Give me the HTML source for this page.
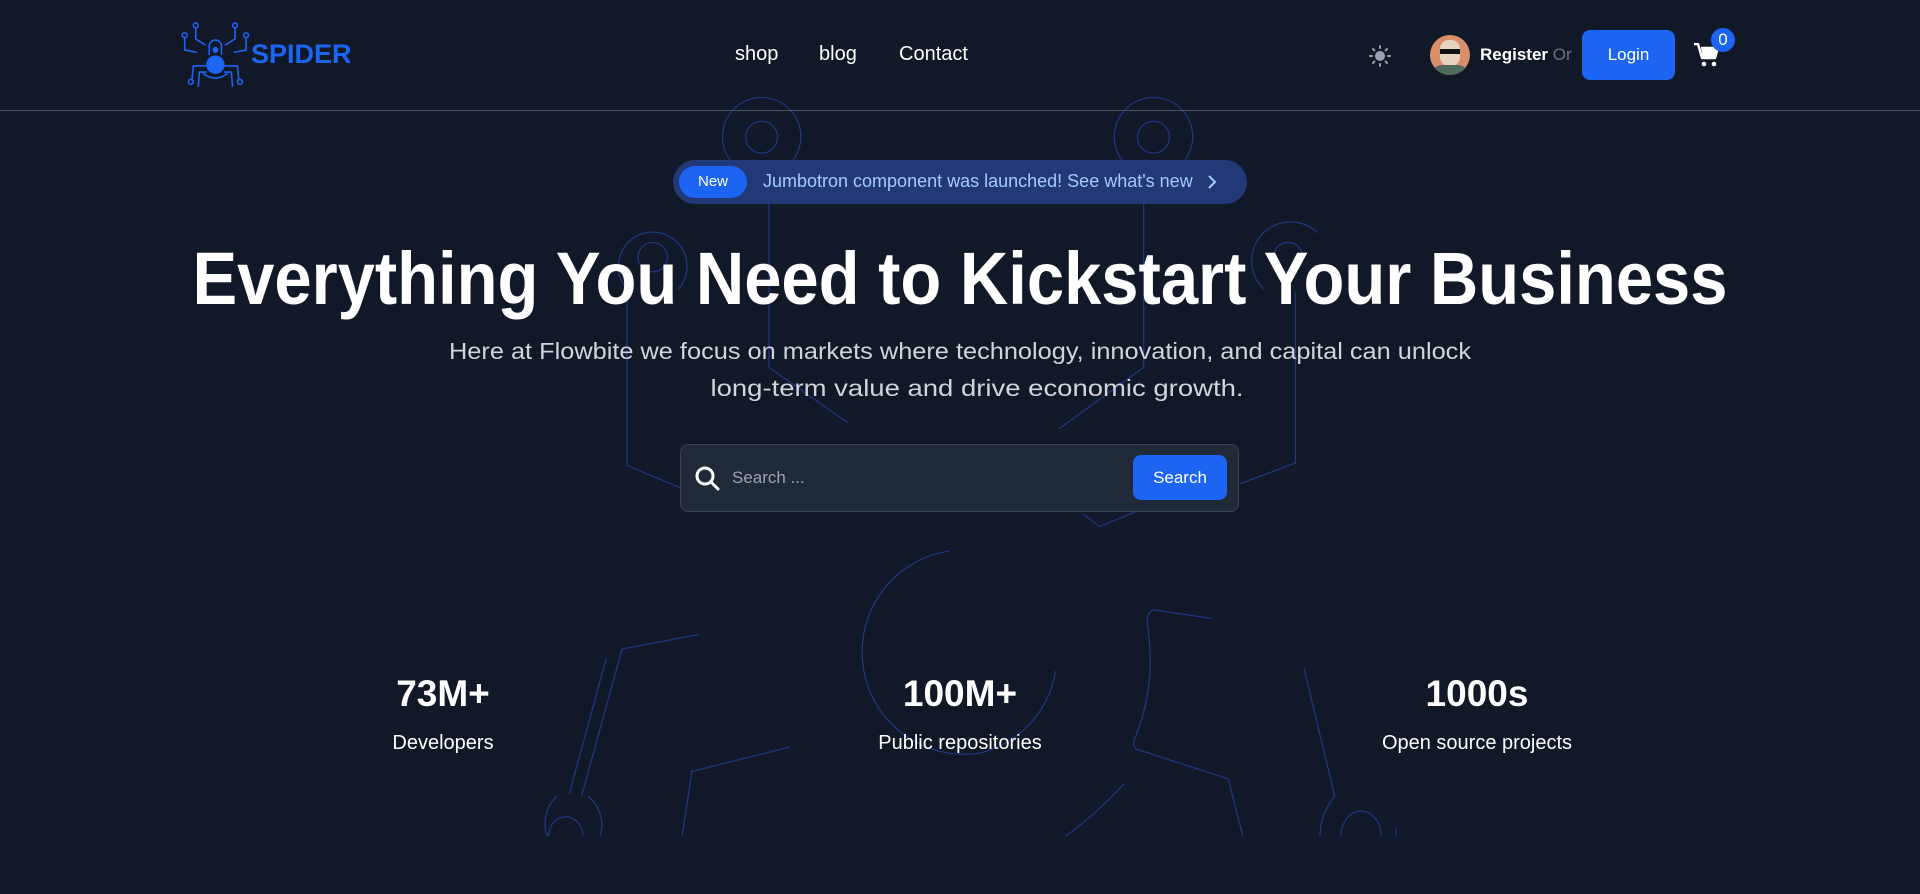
<!DOCTYPE html>
<html><head><meta charset="utf-8"><style>
*{margin:0;padding:0;box-sizing:border-box}
html,body{width:1920px;height:894px;overflow:hidden;background:#111827;font-family:"Liberation Sans",sans-serif;color:#fff}
.bg{position:absolute;left:0;top:0;width:1920px;height:894px}
header{position:absolute;left:0;top:0;width:1920px;height:111px;border-bottom:1px solid #4b5563}
.abs{position:absolute}
.nav a{position:absolute;top:43px;font-size:20px;color:#fff;text-decoration:none}
.badge{position:absolute;left:673px;top:160px;width:574px;height:44px;border-radius:22px;background:#233876}
.badge .new{position:absolute;left:6px;top:6px;width:68px;height:32px;border-radius:16px;background:#1c64f2;font-size:15px;text-align:center;line-height:32px}
.badge .t{position:absolute;left:90px;top:11px;font-size:18px;color:#a4cafe;white-space:nowrap}
.search{position:absolute;left:680px;top:444px;width:559px;height:68px;border-radius:8px;background:#1f2937;border:1px solid #374151}
.btn{position:absolute;background:#1c64f2;border-radius:8px;color:#fff;text-align:center;font-weight:bold}
.stat{position:absolute;width:400px;text-align:center}
.stat b{display:block;font-size:37px;line-height:40px}
.stat span{display:block;font-size:20px;margin-top:18px}
</style></head><body>
<svg class="bg" viewBox="0 0 1568 730" fill="none" stroke="#1e3a8a" stroke-width="1" opacity="0.95">
<circle cx="622" cy="112" r="13"/><path d="M604 138 A32 32 0 1 1 640 138"/>
<path d="M628 140 V300 L692 345"/>
<circle cx="942" cy="112" r="13"/><path d="M924 138 A32 32 0 1 1 960 138"/>
<path d="M934 140 V300 L865 350"/>
<circle cx="533" cy="210" r="12"/><path d="M512 236 A28 28 0 1 1 554 236"/>
<path d="M512 238 V380 L555 398"/>
<circle cx="1052" cy="210" r="12"/><path d="M1032 236 A28 28 0 1 1 1076 190"/>
<path d="M1058 238 V378 L1013 395"/>
<path d="M885 420 L898 430 L927 418"/>
<path d="M775 450 A82 82 0 0 0 800 615 A82 82 0 0 0 862 548"/>
<path d="M571 518 L508 530 L475 650 M495 538 L465 648"/>
<path d="M447 683 A30 30 0 0 1 455 650 M490 683 A30 30 0 0 0 480 650"/>
<path d="M448 683 A14 16 0 0 1 476 683"/>
<path d="M645 610 L565 630 L557 683"/>
<path d="M990 505 L942 498 Q936 500 937 510 Q945 560 926 605 Q925 612 932 613 L1003 636 L1015 683"/>
<path d="M1065 546 L1090 650 Q1078 665 1078 683 M1095 683 A16 20 0 0 1 1128 683 M1140 683 V676"/>
<path d="M918 640 Q895 665 870 683"/>
</svg>

<header>
<svg class="abs" style="left:181px;top:18px" width="70" height="70" viewBox="0 0 57 57" fill="none" stroke="#1c64f2" stroke-width="1.3">
<circle cx="12" cy="6" r="2"/><circle cx="44" cy="6" r="2"/><circle cx="3" cy="14" r="2"/><circle cx="53" cy="14" r="2"/>
<path d="M12 8 V17 L20 22 M44 8 V17 L36 22 M3 16 V26 L13 28 M53 16 V26 L43 28"/>
<path d="M23 30 V23 A5 5 0 0 1 33 23 V30"/><circle cx="28" cy="26" r="1.8" fill="#1c64f2"/>
<circle cx="28" cy="38" r="7.5" fill="#1c64f2" stroke="none"/>
<path d="M21 39 H10 L9 50 M35 39 H46 L47 50 M21 44 H15 L14 56 M35 44 H41 L42 56"/>
<circle cx="8" cy="52" r="2"/><circle cx="48" cy="52" r="2"/>
<path d="M18 45 Q28 53 38 45"/>
</svg>
<div class="abs" style="left:251px;top:39px;font-size:27px;font-weight:bold;color:#1c64f2">SPIDER</div>
<div class="nav"><a style="left:735px">shop</a><a style="left:819px">blog</a><a style="left:899px">Contact</a></div>
<svg class="abs" style="left:1369px;top:45px" width="22" height="22" viewBox="0 0 22 22" fill="#9ca3af" stroke="#9ca3af" stroke-width="2" stroke-linecap="round">
<circle cx="11" cy="11" r="5" stroke="none"/><path d="M11 1v2M11 19v2M1 11h2M19 11h2M4 4l1.4 1.4M16.6 16.6L18 18M4 18l1.4-1.4M16.6 5.4L18 4"/></svg>
<div class="abs" style="left:1430px;top:35px;width:40px;height:40px;border-radius:50%;background:#d9906a;overflow:hidden">
<div class="abs" style="left:10px;top:5px;width:20px;height:26px;border-radius:9px;background:#e8d3c0"></div>
<div class="abs" style="left:10px;top:14px;width:20px;height:5px;background:#111"></div>
<div class="abs" style="left:2px;top:30px;width:36px;height:14px;border-radius:10px 10px 0 0;background:#4d6b5c"></div></div>
<div class="abs" style="left:1480px;top:45px;font-size:17px;font-weight:bold">Register <span style="font-weight:normal;color:#6b7280">Or</span></div>
<div class="btn" style="left:1582px;top:30px;width:93px;height:50px;line-height:50px;font-size:17px;font-weight:normal">Login</div>
<svg class="abs" style="left:1694px;top:43px" width="26" height="24" viewBox="0 0 26 24" fill="#fff">
<path d="M0 1h4l4 14h13l3-10H7" stroke="#fff" stroke-width="2.4" fill="none" stroke-linejoin="round"/><path d="M7 5h17l-3 10H9z"/>
<circle cx="10" cy="21" r="2.3"/><circle cx="20" cy="21" r="2.3"/></svg>
<div class="abs" style="left:1711px;top:28px;width:24px;height:24px;border-radius:50%;background:#1c64f2;text-align:center;line-height:24px;font-size:17px">0</div>
</header>

<div class="badge"><div class="new">New</div><div class="t">Jumbotron component was launched! See what's new</div>
<svg class="abs" style="left:534px;top:15px" width="10" height="14" viewBox="0 0 10 14" fill="none" stroke="#a4cafe" stroke-width="2"><path d="M2 1l6 6-6 6"/></svg></div>

<svg class="abs" style="left:0;top:230px" width="1920" height="100">
<text x="960" y="74" text-anchor="middle" font-family="Liberation Sans" font-weight="bold" font-size="74" fill="#fff" textLength="1535" lengthAdjust="spacingAndGlyphs">Everything You Need to Kickstart Your Business</text></svg>
<svg class="abs" style="left:0;top:330px" width="1920" height="80">
<text x="960" y="29" text-anchor="middle" font-family="Liberation Sans" font-size="23" fill="#d1d5db" textLength="1022" lengthAdjust="spacingAndGlyphs">Here at Flowbite we focus on markets where technology, innovation, and capital can unlock</text>
<text x="977" y="66" text-anchor="middle" font-family="Liberation Sans" font-size="23" fill="#d1d5db" textLength="533" lengthAdjust="spacingAndGlyphs">long-term value and drive economic growth.</text></svg>

<div class="search">
<svg class="abs" style="left:14px;top:21px" width="26" height="26" viewBox="0 0 26 26" fill="none" stroke="#fff" stroke-width="3" stroke-linecap="round"><circle cx="10" cy="10" r="8"/><path d="M16 16l7 7"/></svg>
<div class="abs" style="left:51px;top:23px;font-size:17px;color:#9ca3af">Search ...</div>
<div class="btn" style="left:452px;top:10px;width:94px;height:45px;line-height:45px;font-size:17px;font-weight:normal">Search</div>
</div>

<div class="stat" style="left:243px;top:674px"><b>73M+</b><span>Developers</span></div>
<div class="stat" style="left:760px;top:674px"><b>100M+</b><span>Public repositories</span></div>
<div class="stat" style="left:1277px;top:674px"><b>1000s</b><span>Open source projects</span></div>
</body></html>
